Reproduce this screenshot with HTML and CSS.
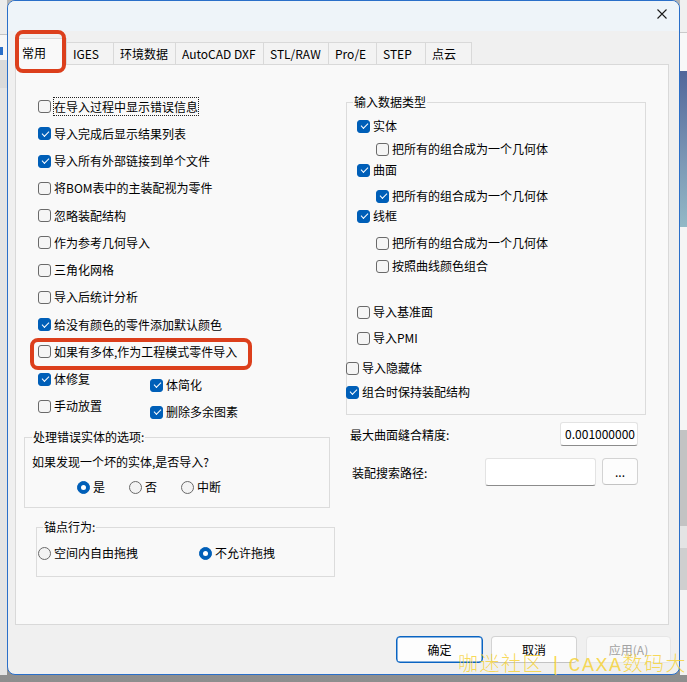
FILE: index.html
```html
<!DOCTYPE html>
<html lang="zh-CN">
<head>
<meta charset="utf-8">
<title>导入设置</title>
<link rel="stylesheet" href="styles.css">
</head>
<body>
<div class="screen">
  <div class="strip strip-left">
    <div class="sl-a"></div>
    <div class="sl-b"><i class="sl-blue"></i></div>
    <div class="sl-c"></div>
    <div class="sl-d"></div>
  </div>

  <div class="dialog">
    <div class="titlebar">
      <svg class="close" width="10" height="10" viewBox="0 0 10 10"><path d="M0.5 0.5 L9.5 9.5 M9.5 0.5 L0.5 9.5" stroke="#1b1b1b" stroke-width="1.1" fill="none"/></svg>
    </div>
    <div class="main">
      <div class="tabs">
        <div class="tab active t1">常用</div>
        <div class="tab t2">IGES</div>
        <div class="tab t3">环境数据</div>
        <div class="tab t4">AutoCAD DXF</div>
        <div class="tab t5">STL/RAW</div>
        <div class="tab t6">Pro/E</div>
        <div class="tab t7">STEP</div>
        <div class="tab t8">点云</div>
      </div>
      <div class="panel">
        <div class="col-left">
          <div class="cblist">
            <label class="cb"><span class="box"></span><span class="txt focus">在导入过程中显示错误信息</span></label>
            <label class="cb"><span class="box on"></span><span class="txt">导入完成后显示结果列表</span></label>
            <label class="cb"><span class="box on"></span><span class="txt">导入所有外部链接到单个文件</span></label>
            <label class="cb"><span class="box"></span><span class="txt">将BOM表中的主装配视为零件</span></label>
            <label class="cb"><span class="box"></span><span class="txt">忽略装配结构</span></label>
            <label class="cb"><span class="box"></span><span class="txt">作为参考几何导入</span></label>
            <label class="cb"><span class="box"></span><span class="txt">三角化网格</span></label>
            <label class="cb"><span class="box"></span><span class="txt">导入后统计分析</span></label>
            <label class="cb"><span class="box on"></span><span class="txt">给没有颜色的零件添加默认颜色</span></label>
            <label class="cb marked"><span class="box"></span><span class="txt">如果有多体,作为工程模式零件导入</span></label>
            <div class="pair">
              <div class="pair-col pc1">
                <label class="cb"><span class="box on"></span><span class="txt">体修复</span></label>
                <label class="cb"><span class="box"></span><span class="txt">手动放置</span></label>
              </div>
              <div class="pair-col pc2">
                <label class="cb"><span class="box on"></span><span class="txt">体简化</span></label>
                <label class="cb"><span class="box on"></span><span class="txt">删除多余图素</span></label>
              </div>
            </div>
          </div>

          <fieldset class="gb gb1">
            <legend>处理错误实体的选项:</legend>
            <div class="gb1-body">
              <div class="line">如果发现一个坏的实体,是否导入?</div>
              <div class="radios r3">
                <label class="rb"><span class="dot on"></span><span class="txt">是</span></label>
                <label class="rb"><span class="dot"></span><span class="txt">否</span></label>
                <label class="rb"><span class="dot"></span><span class="txt">中断</span></label>
              </div>
            </div>
          </fieldset>

          <fieldset class="gb gb2">
            <legend>锚点行为:</legend>
            <div class="gb2-body">
              <div class="radios r2">
                <label class="rb rb-wide"><span class="dot"></span><span class="txt">空间内自由拖拽</span></label>
                <label class="rb"><span class="dot on"></span><span class="txt">不允许拖拽</span></label>
              </div>
            </div>
          </fieldset>
        </div>

        <div class="col-right">
          <fieldset class="gb gb3">
            <legend>输入数据类型</legend>
            <div class="gb3-body">
              <label class="cb rr ind1"><span class="box on"></span><span class="txt">实体</span></label>
              <label class="cb rr ind2 g3"><span class="box"></span><span class="txt">把所有的组合成为一个几何体</span></label>
              <label class="cb rr ind1 g1"><span class="box on"></span><span class="txt">曲面</span></label>
              <label class="cb rr ind2 g6"><span class="box on"></span><span class="txt">把所有的组合成为一个几何体</span></label>
              <label class="cb rr ind1"><span class="box on"></span><span class="txt">线框</span></label>
              <label class="cb rr ind2 g7"><span class="box"></span><span class="txt">把所有的组合成为一个几何体</span></label>
              <label class="cb rr ind2 g3"><span class="box"></span><span class="txt">按照曲线颜色组合</span></label>
              <label class="cb rr ind1 g26"><span class="box"></span><span class="txt">导入基准面</span></label>
              <label class="cb rr ind1 g6"><span class="box"></span><span class="txt">导入PMI</span></label>
              <label class="cb rr ind0 g10"><span class="box"></span><span class="txt">导入隐藏体</span></label>
              <label class="cb rr ind0 g4"><span class="box on"></span><span class="txt">组合时保持装配结构</span></label>
            </div>
          </fieldset>

          <div class="field-row fr1">
            <span class="flabel">最大曲面缝合精度:</span>
            <div class="input num">0.001000000</div>
          </div>
          <div class="field-row fr2">
            <span class="flabel">装配搜索路径:</span>
            <div class="input path"></div>
            <div class="btn browse">...</div>
          </div>
        </div>
      </div>

      <div class="buttons">
        <div class="btn dlg default">确定</div>
        <div class="btn dlg">取消</div>
        <div class="btn dlg disabled">应用(A)</div>
      </div>
    </div>
  </div>

  <div class="strip strip-right">
    <div class="sr-a"></div>
    <div class="sr-b"></div>
    <div class="sr-img"></div>
    <div class="sr-c"></div>
    <div class="sr-d"></div>
    <div class="sr-e"></div>
    <div class="sr-f"></div>
    <div class="sr-g"></div>
  </div>

  <div class="watermark">咖迷社区 | CAXA数码大方</div>
</div>
</body>
</html>
```

FILE: styles.css
```css
* { box-sizing: border-box; }
html, body { margin: 0; padding: 0; }
body {
  width: 687px;
  height: 682px;
  overflow: hidden;
  font-family: "Noto Sans CJK SC", "Noto Sans", sans-serif;
  font-size: 12px;
  color: #000;
  background: #9d9d9d;
}
.screen {
  position: relative;
  display: flex;
  align-items: flex-start;
  width: 687px;
  height: 682px;
  background: linear-gradient(#b4b4b4, #8e8e8e);
}

/* desktop strips */
.strip { width: 7px; height: 675px; display: flex; flex-direction: column; }
.sl-a { height: 35px; background: #ececec; border-bottom: 1px solid #c4c4c4; }
.sl-b { height: 25px; background: #f6f6f6; padding-top: 12px; }
.sl-blue { display: block; width: 3px; height: 8px; background: #2b6fc8; }
.sl-c { height: 28px; background: #dadada; }
.sl-d { flex: 1; background: #e4e4e4; }

.sr-a { height: 33px; background: #f0f0f0; border-bottom: 1px solid #cacaca; }
.sr-b { height: 38px; background: #f8f8f8; }
.sr-img { height: 156px; background: linear-gradient(#52669a, #7d9ab6 60%, #93b9c6); }
.sr-c { height: 203px; background: #f5f5f5; }
.sr-d { height: 96px; background: #c3c3c3; }
.sr-e { height: 22px; background: #e4e4e4; }
.sr-f { height: 42px; background: #cfcfcf; }
.sr-g { flex: 1; background: #f3f3f3; }

/* dialog window */
.dialog {
  width: 673px;
  height: 675px;
  border: 1px solid #2a6fc9;
  border-radius: 8px;
  background: #f0f0f0;
  overflow: hidden;
  display: flex;
  flex-direction: column;
}
.titlebar {
  height: 30px;
  flex: 0 0 30px;
  background: #eef4f9;
  display: flex;
  justify-content: flex-end;
  align-items: flex-start;
  padding: 8px 12px 0 0;
}
.close { display: block; }

.main {
  flex: 1;
  display: flex;
  flex-direction: column;
  padding: 7px 10px 0 7px;
}

/* tabs */
.tabs {
  display: flex;
  align-items: flex-end;
  height: 26px;
  position: relative;
  z-index: 2;
}
.tab {
  height: 22px;
  border: 1px solid #d9d9d9;
  border-bottom: none;
  background: #f3f3f3;
  margin-left: -1px;
  padding: 1px 0 0 6px;
  display: flex;
  align-items: center;
  line-height: 16px;
  white-space: nowrap;
}
.tab.active {
  height: 27px;
  margin-left: 0;
  margin-bottom: -1px;
  background: #f9f9f9;
  padding-top: 1px;
  position: relative;
  z-index: 3;
}
.tab.active::after {
  content: "";
  box-sizing: border-box;
  position: absolute;
  left: -1px;
  top: -9px;
  width: 51px;
  height: 43px;
  border: 4px solid #dc3f1c;
  border-radius: 8px;
}
.t1 { width: 52px; }
.t2 { width: 48px; }
.t3 { width: 63px; }
.t4 { width: 89px; }
.t5 { width: 66px; }
.t6 { width: 49px; }
.t7 { width: 50px; }
.t8 { width: 47px; }

/* panel */
.panel {
  height: 561px;
  border: 1px solid #d9d9d9;
  background: #f9f9f9;
  display: flex;
  position: relative;
  z-index: 1;
}
.col-left { width: 330px; display: flex; flex-direction: column; }
.col-right { width: 300px; display: flex; flex-direction: column; }

/* checkboxes */
.cb { display: flex; align-items: center; line-height: 16px; white-space: nowrap; }
.box {
  position: relative;
  flex: 0 0 13px;
  width: 13px;
  height: 13px;
  border: 1px solid #6a6a6a;
  border-radius: 3px;
  background: #f5f5f5;
  margin-right: 3px;
}
.box.on { background: #005fb8; border-color: #005fb8; }
.box.on::after {
  content: "";
  position: absolute;
  left: 2.5px;
  top: 2.5px;
  width: 6px;
  height: 3px;
  border-left: 1.2px solid #fff;
  border-bottom: 1.2px solid #fff;
  transform: rotate(-45deg);
}
.txt.focus {
  border: 1px dotted #222;
  line-height: 17px;
  margin-left: -1px;
}

.cblist { margin: 28px 0 0 22px; display: flex; flex-direction: column; }
.cblist .cb { height: 27.25px; }
.cb.marked { position: relative; }
.cb.marked::after {
  content: "";
  box-sizing: border-box;
  position: absolute;
  left: -8px;
  top: 0;
  width: 222px;
  height: 32px;
  border: 4px solid #dc3f1c;
  border-radius: 8px;
}
.pair { display: flex; height: 54.5px; align-items: flex-start; }
.pair-col { display: flex; flex-direction: column; }
.pc1 { width: 112px; }
.pc2 { padding-top: 6px; }

/* group boxes */
.gb {
  margin: 0;
  padding: 0;
  border: 1px solid #dcdcdc;
  min-width: 0;
}
.gb legend {
  padding: 0 1px;
  line-height: 16px;
  color: #000;
}
.gb1 { margin: 9px 0 0 8px; width: 306px; }
.gb1 legend { margin-left: 7px; }
.gb1-body { padding: 9px 0 12px 7px; }
.line { line-height: 16px; height: 16px; }
.radios { display: flex; height: 16px; align-items: center; }
.r3 { margin: 9px 0 0 45px; }
.r3 .rb { width: 52px; }
.rb { display: flex; align-items: center; line-height: 16px; white-space: nowrap; }
.dot {
  position: relative;
  flex: 0 0 13px;
  width: 13px;
  height: 13px;
  border: 1px solid #6a6a6a;
  border-radius: 50%;
  background: #f3f3f3;
  margin-right: 3px;
}
.dot.on { background: #005fb8; border-color: #005fb8; }
.dot.on::after {
  content: "";
  position: absolute;
  left: 3px;
  top: 3px;
  width: 5px;
  height: 5px;
  border-radius: 50%;
  background: #fff;
}

.gb2 { margin: 11px 0 0 20px; width: 299px; }
.gb2 legend { margin-left: 6px; }
.gb2-body { padding: 10px 0 15px 1px; }
.rb-wide { width: 161px; }

.gb3 { margin: 29px 0 0 0; width: 300px; }
.gb3 legend { margin-left: 6px; }
.gb3-body { padding: 6px 0 12px 0; display: flex; flex-direction: column; }
.rr { height: 20px; }
.ind0 { margin-left: -1px; }
.ind1 { margin-left: 10px; }
.ind2 { margin-left: 29px; }
.g1 { margin-top: 1px; }
.g3 { margin-top: 3px; }
.g4 { margin-top: 4px; }
.g6 { margin-top: 6px; }
.g7 { margin-top: 7px; }
.g10 { margin-top: 10px; }
.g26 { margin-top: 26px; }

/* fields */
.field-row { display: flex; align-items: center; }
.fr1 { margin-top: 7px; height: 24px; }
.fr1 .flabel { margin-left: 4px; }
.fr2 { margin-top: 12px; height: 28px; }
.fr2 .flabel { margin-left: 6px; }
.input {
  background: #fff;
  border: 1px solid #e3e3e3;
  border-bottom-color: #8c8c8c;
  border-radius: 3px;
}
.num {
  width: 78px;
  height: 24px;
  margin-left: auto;
  margin-right: 8px;
  text-align: right;
  padding: 0 2px 0 0;
  line-height: 22px;
}
.path {
  width: 111px;
  height: 28px;
  margin-left: auto;
}
.btn {
  display: flex;
  align-items: center;
  justify-content: center;
  background: #fdfdfd;
  border: 1px solid #d3d3d3;
  border-bottom-color: #c3c3c3;
  border-radius: 4px;
  line-height: 16px;
}
.browse {
  width: 36px;
  height: 27px;
  margin: 0 8px 0 6px;
  align-self: flex-start;
}

/* dialog buttons */
.buttons {
  display: flex;
  justify-content: flex-end;
  margin: 11px -2px 0 0;
  height: 27px;
}
.dlg { height: 27px; }
.dlg:nth-child(1) { width: 87px; }
.dlg:nth-child(2) { width: 86px; margin-left: 8px; }
.dlg:nth-child(3) { width: 85px; margin-left: 9px; }
.dlg.default { border: 1px solid #0a64c2; box-shadow: inset 0 0 0 0.5px #0a64c2; }
.dlg.disabled { color: #a2a2a2; background: #f9f9f9; border-color: #e6e6e6; }

/* watermark */
.watermark {
  position: absolute;
  left: 458px;
  top: 653px;
  font-family: "Liberation Mono", "Noto Sans CJK SC", monospace;
  font-size: 20px;
  line-height: 26px;
  letter-spacing: 1.5px;
  word-spacing: -8px;
  color: rgba(246, 208, 45, 0.8);
  white-space: nowrap;
  font-weight: 300;
}
```
